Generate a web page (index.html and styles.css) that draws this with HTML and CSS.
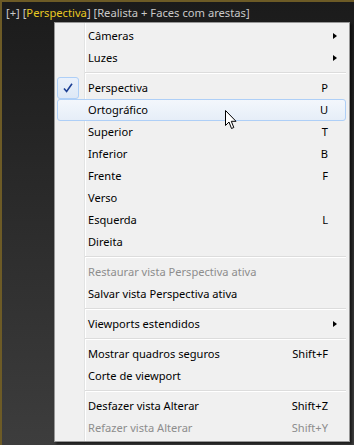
FILE: index.html
```html
<!DOCTYPE html>
<html lang="pt">
<head>
    <meta charset="UTF-8">
    <title>Viewport Menu</title>
    <link rel="stylesheet" href="styles.css">
</head>
<body>
    <div class="viewport">
        <div class="label">[+] [<span class="active">Perspectiva</span>] [Realista + Faces com arestas]</div>

        <div class="menu">
            <div class="item"><span class="icon"></span><span class="text">Câmeras</span><span class="arrow"></span></div>
            <div class="item"><span class="icon"></span><span class="text">Luzes</span><span class="arrow"></span></div>
            <div class="sep"></div>
            <div class="item"><span class="icon checked">
                <svg width="10" height="10" viewBox="0 0 10 10"><path d="M1 5.5 L3.6 8.5 L9 0.8" fill="none" stroke="#1c3f94" stroke-width="1.6"/></svg>
            </span><span class="text">Perspectiva</span><span class="key">P</span></div>
            <div class="item hover"><span class="icon"></span><span class="text">Ortográfico</span><span class="key">U</span></div>
            <div class="item"><span class="icon"></span><span class="text">Superior</span><span class="key">T</span></div>
            <div class="item"><span class="icon"></span><span class="text">Inferior</span><span class="key">B</span></div>
            <div class="item"><span class="icon"></span><span class="text">Frente</span><span class="key">F</span></div>
            <div class="item"><span class="icon"></span><span class="text">Verso</span></div>
            <div class="item"><span class="icon"></span><span class="text">Esquerda</span><span class="key">L</span></div>
            <div class="item"><span class="icon"></span><span class="text">Direita</span></div>
            <div class="sep"></div>
            <div class="item disabled"><span class="icon"></span><span class="text">Restaurar vista Perspectiva ativa</span></div>
            <div class="item"><span class="icon"></span><span class="text">Salvar vista Perspectiva ativa</span></div>
            <div class="sep"></div>
            <div class="item"><span class="icon"></span><span class="text">Viewports estendidos</span><span class="arrow"></span></div>
            <div class="sep"></div>
            <div class="item"><span class="icon"></span><span class="text">Mostrar quadros seguros</span><span class="key">Shift+F</span></div>
            <div class="item"><span class="icon"></span><span class="text">Corte de viewport</span></div>
            <div class="sep"></div>
            <div class="item"><span class="icon"></span><span class="text">Desfazer vista Alterar</span><span class="key">Shift+Z</span></div>
            <div class="item disabled"><span class="icon"></span><span class="text">Refazer vista Alterar</span><span class="key">Shift+Y</span></div>
        </div>

        <svg class="cursor" width="13" height="20" viewBox="0 0 13 20">
            <path d="M0.5 0.5 L0.5 15.5 L4 12 L6.5 18.5 L8.8 17.5 L6.3 11.3 L11 11.3 Z" fill="#fff" stroke="#000" stroke-width="1" stroke-linejoin="miter"/>
        </svg>
    </div>
</body>
</html>
```

FILE: styles.css
```css
* {
    box-sizing: border-box;
}
html, body {
    margin: 0;
    padding: 0;
}
body {
    width: 354px;
    height: 445px;
    overflow: hidden;
    font-family: "Noto Sans", "Open Sans", sans-serif;
    font-size: 11.1px;
}
.viewport {
    position: relative;
    width: 354px;
    height: 445px;
    border-left: 2px solid #6d5b26;
    border-top: 2px solid #6d5b26;
    background: linear-gradient(#1b1b1b, #3d3d3d);
}
.label {
    height: 20px;
    line-height: 20px;
    padding-left: 4px;
    padding-top: 1px;
    font-size: 11.2px;
    color: #c9c9c9;
    white-space: nowrap;
}
.label .active {
    color: #e8c923;
}
.menu {
    width: 296px;
    margin-left: 52px;
    padding: 2px 3px 2px 2px;
    border: 1px solid #979797;
    background-color: #f0f0f0;
    background-image: linear-gradient(to right, transparent 29px, #e2e3e3 29px, #e2e3e3 30px, #fff 30px, #fff 31px, transparent 31px);
    box-shadow: 2px 2px 2px rgba(0, 0, 0, 0.55);
    color: #000;
}
.item {
    display: flex;
    align-items: center;
    height: 22px;
    padding-right: 8px;
    border: 1px solid transparent;
    border-radius: 3px;
    white-space: nowrap;
}
.item.hover {
    border-color: #aecff7;
    background: linear-gradient(#f3f7fc, #e6eef8);
}
.item.disabled {
    color: #8d8d8d;
}
.icon {
    width: 22px;
    height: 22px;
    margin: -1px 9px 0 -1px;
    flex-shrink: 0;
    display: flex;
    align-items: center;
    justify-content: center;
}
.icon.checked {
    border: 1px solid #aecff7;
    border-radius: 3px;
    background: linear-gradient(#eaf1fb, #dde8f6);
}
.text {
    flex: 1;
    padding-bottom: 2px;
}
.key {
    margin-right: 9px;
    padding-bottom: 2px;
}
.arrow {
    width: 0;
    height: 0;
    border-left: 4px solid #000;
    border-top: 3.5px solid transparent;
    border-bottom: 3.5px solid transparent;
}
.sep {
    height: 8px;
    margin-left: 28px;
    background: linear-gradient(transparent 3px, #dcdcdc 3px, #dcdcdc 4px, #fff 4px, #fff 5px, transparent 5px);
}
.cursor {
    position: absolute;
    left: 223px;
    top: 108px;
}
```
